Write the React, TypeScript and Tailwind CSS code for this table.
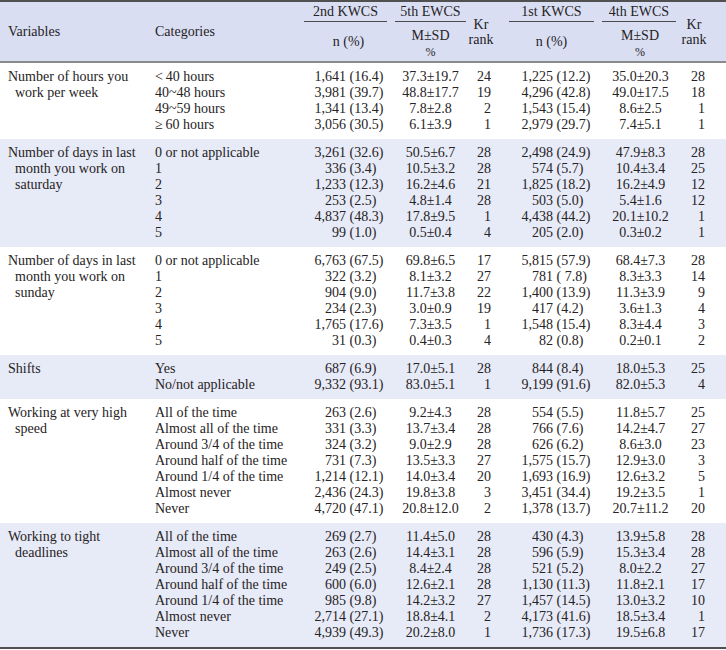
import React from 'react';

type Row = [string, string, string, string, string, string, string];

interface Group {
  variable: string[];
  shaded: boolean;
  rows: Row[];
}

const groups: Group[] = [
  {
    variable: ['Number of hours you', 'work per week'],
    shaded: false,
    rows: [
      ['<\u200940 hours', '1,641 (16.4)', '37.3±19.7', '24', '1,225 (12.2)', '35.0±20.3', '28'],
      ['40~48 hours', '3,981 (39.7)', '48.8±17.7', '19', '4,296 (42.8)', '49.0±17.5', '18'],
      ['49~59 hours', '1,341 (13.4)', '7.8±2.8', '2', '1,543 (15.4)', '8.6±2.5', '1'],
      ['≥\u200960 hours', '3,056 (30.5)', '6.1±3.9', '1', '2,979 (29.7)', '7.4±5.1', '1'],
    ],
  },
  {
    variable: ['Number of days in last', 'month you work on', 'saturday'],
    shaded: true,
    rows: [
      ['0 or not applicable', '3,261 (32.6)', '50.5±6.7', '28', '2,498 (24.9)', '47.9±8.3', '28'],
      ['1', '336 (3.4)', '10.5±3.2', '28', '574 (5.7)', '10.4±3.4', '25'],
      ['2', '1,233 (12.3)', '16.2±4.6', '21', '1,825 (18.2)', '16.2±4.9', '12'],
      ['3', '253 (2.5)', '4.8±1.4', '28', '503 (5.0)', '5.4±1.6', '12'],
      ['4', '4,837 (48.3)', '17.8±9.5', '1', '4,438 (44.2)', '20.1±10.2', '1'],
      ['5', '99 (1.0)', '0.5±0.4', '4', '205 (2.0)', '0.3±0.2', '1'],
    ],
  },
  {
    variable: ['Number of days in last', 'month you work on', 'sunday'],
    shaded: false,
    rows: [
      ['0 or not applicable', '6,763 (67.5)', '69.8±6.5', '17', '5,815 (57.9)', '68.4±7.3', '28'],
      ['1', '322 (3.2)', '8.1±3.2', '27', '781 ( 7.8)', '8.3±3.3', '14'],
      ['2', '904 (9.0)', '11.7±3.8', '22', '1,400 (13.9)', '11.3±3.9', '9'],
      ['3', '234 (2.3)', '3.0±0.9', '19', '417 (4.2)', '3.6±1.3', '4'],
      ['4', '1,765 (17.6)', '7.3±3.5', '1', '1,548 (15.4)', '8.3±4.4', '3'],
      ['5', '31 (0.3)', '0.4±0.3', '4', '82 (0.8)', '0.2±0.1', '2'],
    ],
  },
  {
    variable: ['Shifts'],
    shaded: true,
    rows: [
      ['Yes', '687 (6.9)', '17.0±5.1', '28', '844 (8.4)', '18.0±5.3', '25'],
      ['No/not applicable', '9,332 (93.1)', '83.0±5.1', '1', '9,199 (91.6)', '82.0±5.3', '4'],
    ],
  },
  {
    variable: ['Working at very high', 'speed'],
    shaded: false,
    rows: [
      ['All of the time', '263 (2.6)', '9.2±4.3', '28', '554 (5.5)', '11.8±5.7', '25'],
      ['Almost all of the time', '331 (3.3)', '13.7±3.4', '28', '766 (7.6)', '14.2±4.7', '27'],
      ['Around 3/4 of the time', '324 (3.2)', '9.0±2.9', '28', '626 (6.2)', '8.6±3.0', '23'],
      ['Around half of the time', '731 (7.3)', '13.5±3.3', '27', '1,575 (15.7)', '12.9±3.0', '3'],
      ['Around 1/4 of the time', '1,214 (12.1)', '14.0±3.4', '20', '1,693 (16.9)', '12.6±3.2', '5'],
      ['Almost never', '2,436 (24.3)', '19.8±3.8', '3', '3,451 (34.4)', '19.2±3.5', '1'],
      ['Never', '4,720 (47.1)', '20.8±12.0', '2', '1,378 (13.7)', '20.7±11.2', '20'],
    ],
  },
  {
    variable: ['Working to tight', 'deadlines'],
    shaded: true,
    rows: [
      ['All of the time', '269 (2.7)', '11.4±5.0', '28', '430 (4.3)', '13.9±5.8', '28'],
      ['Almost all of the time', '263 (2.6)', '14.4±3.1', '28', '596 (5.9)', '15.3±3.4', '28'],
      ['Around 3/4 of the time', '249 (2.5)', '8.4±2.4', '28', '521 (5.2)', '8.0±2.2', '27'],
      ['Around half of the time', '600 (6.0)', '12.6±2.1', '28', '1,130 (11.3)', '11.8±2.1', '17'],
      ['Around 1/4 of the time', '985 (9.8)', '14.2±3.2', '27', '1,457 (14.5)', '13.0±3.2', '10'],
      ['Almost never', '2,714 (27.1)', '18.8±4.1', '2', '4,173 (41.6)', '18.5±3.4', '1'],
      ['Never', '4,939 (49.3)', '20.2±8.0', '1', '1,736 (17.3)', '19.5±6.8', '17'],
    ],
  },
];

// splits "1,641 (16.4)" so the opening bracket lines up down the column
const CountCell = ({ value, leftWidth }: { value: string; leftWidth: string }) => {
  const i = value.indexOf(' (');
  const count = value.slice(0, i);
  const rest = value.slice(i + 1);
  return (
    <div className="flex whitespace-pre">
      <span className={`${leftWidth} text-right shrink-0`}>{count}</span>
      <span className="pl-[3.5px]">{rest}</span>
    </div>
  );
};

const SurveyHead = ({ label }: { label: string }) => (
  <div className="mx-[4px] h-full flex items-center justify-center border-b border-[#4a4a4a]">
    {label}
  </div>
);

const App: React.FC = () => {
  return (
    <div className="w-[726px] h-[650px] bg-white text-[#262324] text-[14px] leading-[16px] font-['Liberation_Serif','Times_New_Roman',serif] overflow-hidden">
      <div className="border-t-2 border-b-2 border-t-[#505050] border-b-[#8a8a8a] bg-[#d9def3]">
        <div className="grid grid-cols-[150px_150px_91px_79px_35px_93px_82px_46px] grid-rows-[20px_39px]">
          <div className="row-span-2 flex items-center pl-[8px]">Variables</div>
          <div className="row-span-2 flex items-center pl-[5px]">Categories</div>
          <SurveyHead label="2nd KWCS" />
          <SurveyHead label="5th EWCS" />
          <div className="row-span-2 flex flex-col items-center justify-center pr-[13px] leading-[15px]">
            <span>Kr</span>
            <span>rank</span>
          </div>
          <SurveyHead label="1st KWCS" />
          <SurveyHead label="4th EWCS" />
          <div className="row-span-2 flex flex-col items-center justify-center pr-[18px] leading-[15px]">
            <span>Kr</span>
            <span>rank</span>
          </div>
          <div className="flex items-center justify-center pl-[6px]">n (%)</div>
          <div className="flex flex-col items-center justify-center pt-[4px]">
            <span>M±SD</span>
            <span className="text-[12px]">%</span>
          </div>
          <div className="flex items-center justify-center">n (%)</div>
          <div className="flex flex-col items-center justify-center pt-[4px] pl-[2px]">
            <span>M±SD</span>
            <span className="text-[12px]">%</span>
          </div>
        </div>
      </div>

      {groups.map((g, gi) => (
        <div key={gi} className={`flex py-[6px] ${g.shaded ? 'bg-[#e7eaf7]' : 'bg-white'}`}>
          <div className="w-[150px] shrink-0">
            {g.variable.map((line, li) => (
              <div key={li} className={li === 0 ? 'pl-[8px]' : 'pl-[15px]'}>
                {line}
              </div>
            ))}
          </div>
          <div className="flex-1">
            {g.rows.map((r, ri) => (
              <div key={ri} className="grid grid-cols-[150px_91px_79px_35px_93px_82px_46px] h-[16px]">
                <div className="pl-[5px] whitespace-nowrap">{r[0]}</div>
                <CountCell value={r[1]} leftWidth="w-[46px]" />
                <div className="text-center">{r[2]}</div>
                <div className="text-right pr-[14px]">{r[3]}</div>
                <CountCell value={r[4]} leftWidth="w-[48px]" />
                <div className="text-center pl-[3px]">{r[5]}</div>
                <div className="text-right pr-[21px]">{r[6]}</div>
              </div>
            ))}
          </div>
        </div>
      ))}

      <div className="border-t-2 border-[#505050]" />
    </div>
  );
};

export default App;
